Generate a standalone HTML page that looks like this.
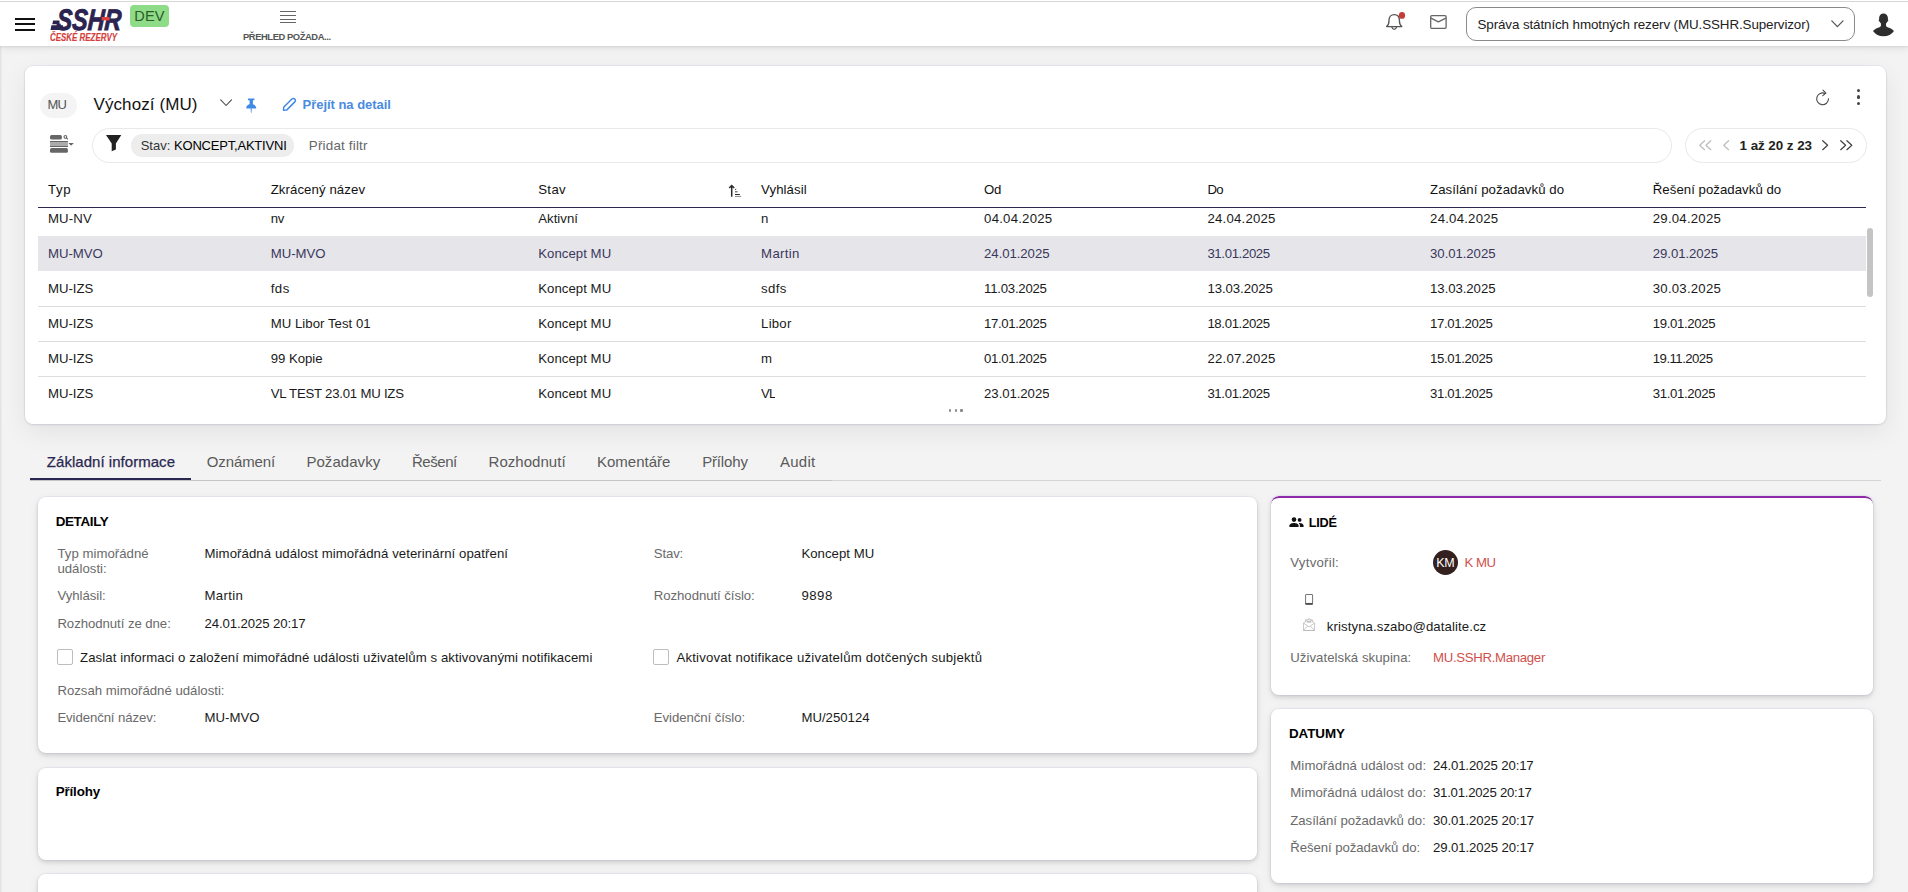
<!DOCTYPE html>
<html lang="cs">
<head>
<meta charset="utf-8">
<title>Přehled požadavků – SSHR</title>
<style>
*{box-sizing:border-box;margin:0;padding:0}
html,body{width:1908px;height:892px;overflow:hidden;background:#f3f3f3;font-family:"Liberation Sans",sans-serif;font-size:13.4px;color:#1a1a1a}
.abs{position:absolute}
.t{position:absolute;white-space:pre;line-height:16px}
svg{position:absolute;overflow:visible}
#topbar{position:absolute;left:0;top:0;width:1908px;height:46px;background:#fff;box-shadow:0 1px 2px rgba(0,0,0,.07),0 2px 8px rgba(0,0,0,.09)}
#topline{position:absolute;left:0;top:1px;width:1908px;height:1px;background:#d6d6d6}
.card{position:absolute;background:#fff;border-radius:8px;box-shadow:0 2px 4px rgba(0,0,0,.13),0 3px 12px rgba(0,0,0,.06),0 0 0 1px rgba(214,224,240,.40)}
.hl{position:absolute;height:1px;background:#dedede}
.cb{position:absolute;width:16px;height:16px;border:1px solid #bdbdbd;border-radius:2px;background:#fff}
</style>
</head>
<body>
<div class="abs" style="left:0;top:46px;width:2px;height:846px;background:linear-gradient(90deg,#e2e2e2,#ececec)"></div>
<div id="topbar"></div><div id="topline"></div>
<div class="abs" style="left:15px;top:17.5px;width:20px;height:2px;background:#111"></div><div class="abs" style="left:15px;top:23px;width:20px;height:2px;background:#111"></div><div class="abs" style="left:15px;top:28.5px;width:20px;height:2px;background:#111"></div>
<svg style="left:0;top:0" width="180" height="46" viewBox="0 0 180 46"><g transform="translate(56.3,29.7) scale(1,1.16) skewX(-4)"><text x="0" y="0" font-family="Liberation Sans, sans-serif" font-size="25.6" font-weight="700" font-style="italic" fill="#2b2350" stroke="#2b2350" stroke-width="0.75" textLength="64.5" lengthAdjust="spacingAndGlyphs">SSHR</text></g><path d="M51.4 25.3 H63 V29.95 H50.5 Z M53.1 20.5 H59.5 V24.3 H52.3 Z" fill="#2b2350"/><rect x="101.6" y="17" width="8" height="3.4" fill="#e0413a"/><g transform="translate(50,40.7) scale(1,1.14)"><text x="0" y="0" font-family="Liberation Sans, sans-serif" font-size="9.3" font-weight="700" font-style="italic" fill="#d5403c" stroke="#d5403c" stroke-width="0.15" textLength="67" lengthAdjust="spacingAndGlyphs">ČESKÉ REZERVY</text></g></svg>
<div class="abs" style="left:130px;top:5px;width:39px;height:22px;border-radius:4px;background:#8edc87"></div>
<div class="t" style="left:134.3px;top:8px;font-size:14.6px;color:#2c5a28;letter-spacing:0.092px;">DEV</div>
<div class="abs" style="left:280px;top:11.2px;width:16px;height:1.1px;background:#666"></div>
<div class="abs" style="left:280px;top:14.9px;width:16px;height:1.1px;background:#666"></div>
<div class="abs" style="left:280px;top:18.5px;width:16px;height:1.1px;background:#666"></div>
<div class="abs" style="left:280px;top:22.1px;width:16px;height:1.1px;background:#666"></div>
<div class="t" style="left:243.0px;top:29px;font-size:9.4px;font-weight:700;color:#555;letter-spacing:-0.426px;">PŘEHLED POŽADA...</div>
<svg style="left:1384px;top:12px" width="22" height="22" viewBox="0 0 22 22" fill="none" stroke="#555" stroke-width="1.3" stroke-linecap="round" stroke-linejoin="round"><path d="M2.6 14.6 C4.6 13 5 11.6 5 8.4 C5 5 7 2.6 10.2 2.6 C13.4 2.6 15.4 5 15.4 8.4 C15.4 11.6 15.8 13 17.8 14.6 Z"/><path d="M7.9 15.2 C8.3 16.8 9.1 17.4 10.2 17.4 C11.3 17.4 12.1 16.8 12.5 15.2"/><ellipse cx="18" cy="3.4" rx="3.1" ry="3.4" fill="#c43c37" stroke="none"/></svg>
<svg style="left:1430px;top:15px" width="17" height="14" viewBox="0 0 17 14" fill="none" stroke="#666" stroke-width="1.3" stroke-linejoin="round"><rect x="0.7" y="0.7" width="15.4" height="12.6" rx="1"/><path d="M0.9 3.1 L8.4 6.9 L15.9 3.1"/></svg>
<div class="abs" style="left:1466px;top:7px;width:389px;height:34px;border:1px solid #8a8a8a;border-radius:10px;background:#fff"></div>
<div class="t" style="left:1477.5px;top:17px;font-size:13.4px;color:#222;letter-spacing:-0.105px;">Správa státních hmotných rezerv (MU.SSHR.Supervizor)</div>
<svg style="left:1831px;top:19.5px" width="13" height="8" viewBox="0 0 13 8" fill="none" stroke="#555" stroke-width="1.3" stroke-linecap="round" stroke-linejoin="round"><path d="M0.8 0.9 L6.4 6.6 L12 0.9"/></svg>
<svg style="left:1873px;top:12.5px" width="21" height="24" viewBox="0 0 21 24"><g fill="#2e2e2e"><rect x="6.1" y="0.4" width="8.8" height="10.8" rx="4.4" ry="4.8"/><ellipse cx="10.5" cy="7.6" rx="4.9" ry="1.3"/><path d="M7.6 9 C8.2 11.6 8.3 13.2 7 13.9 C4.4 14.7 1.6 15.9 0 17.9 C2.4 21.1 6 23.3 10.5 23.3 C15 23.3 18.6 21.1 21 17.9 C19.4 15.9 16.6 14.7 14 13.9 C12.7 13.2 12.8 11.6 13.4 9 Z"/></g></svg>
<div class="card" style="left:25px;top:66px;width:1861px;height:358px;box-shadow:0 1px 3px rgba(0,0,0,.08),0 8px 26px rgba(0,0,0,.07),0 0 0 1px rgba(205,216,234,.35)"></div>
<div class="abs" style="left:39.5px;top:92.5px;width:37px;height:25px;border-radius:12.5px;background:#f4f4f4"></div>
<div class="t" style="left:47.5px;top:97px;font-size:13px;color:#555;letter-spacing:-0.719px;">MU</div>
<div class="t" style="left:93.5px;top:97px;font-size:17px;color:#111;letter-spacing:0.094px;">Výchozí (MU)</div>
<svg style="left:219.8px;top:98.5px" width="13" height="8" viewBox="0 0 13 8" fill="none" stroke="#444" stroke-width="1.05" stroke-linecap="round" stroke-linejoin="round"><path d="M0.7 0.8 L6.1 6.5 L11.5 0.8"/></svg>
<svg style="left:245px;top:97.5px" width="13" height="16" viewBox="0 0 13 16"><g fill="#408ae6"><rect x="2.9" y="0.5" width="6.6" height="1.7" rx="0.5"/><rect x="4.6" y="1.8" width="3.3" height="5"/><path d="M1.2 10.6 C1 8 3 6.1 6.2 6.1 C9.4 6.1 11.4 8 11.2 10.6 Z"/><path d="M5.6 10.4 H6.8 L6.4 15 H6 Z"/></g></svg>
<svg style="left:282px;top:97px" width="15" height="15" viewBox="0 0 15 15" fill="none" stroke="#408ae6" stroke-width="1.5" stroke-linejoin="round"><path d="M1.7 10.2 L9.9 2 A2.05 2.05 0 0 1 12.8 4.9 L4.6 13.1 L1.5 13.3 Z"/></svg>
<div class="t" style="left:302.5px;top:97px;font-size:13px;font-weight:700;color:#4a8be0;letter-spacing:-0.025px;">Přejít na detail</div>
<svg style="left:1815px;top:88.5px" width="16" height="17" viewBox="0 0 16 17" fill="none" stroke="#484848" stroke-width="1.1" stroke-linecap="round" stroke-linejoin="round"><path d="M13.5 9.8 A5.9 5.9 0 1 1 10 4.4"/><path d="M8 1.1 L10.9 4.1 L7.8 6.6"/></svg>
<div class="abs" style="left:1856.6px;top:88.89999999999999px;width:3.4px;height:3.4px;border-radius:50%;background:#444"></div>
<div class="abs" style="left:1856.6px;top:95.2px;width:3.4px;height:3.4px;border-radius:50%;background:#444"></div>
<div class="abs" style="left:1856.6px;top:101.5px;width:3.4px;height:3.4px;border-radius:50%;background:#444"></div>
<svg style="left:50px;top:135px" width="24" height="18" viewBox="0 0 24 18"><rect x="0" y="0" width="11.9" height="4.4" rx="1.5" fill="#666"/><rect x="0" y="6" width="17.9" height="6" fill="#ababab"/><rect x="0" y="6" width="17.9" height="1" fill="#666"/><rect x="0" y="11" width="17.9" height="1" fill="#666"/><rect x="0" y="13.1" width="17.9" height="4.7" rx="1.5" fill="#666"/><path d="M18.4 7.9 H23.8 L21.1 10.8 Z" fill="#666"/><circle cx="15.4" cy="1.9" r="1.35" fill="none" stroke="#666" stroke-width="1.1"/><path d="M16.4 2.9 L17.8 4.3" stroke="#666" stroke-width="1.1"/></svg>
<div class="abs" style="left:92px;top:128px;width:1580px;height:35px;border:1px solid #e9e9e9;border-radius:17.5px;background:#fff"></div>
<svg style="left:105.8px;top:134.9px" width="16" height="17" viewBox="0 0 16 17"><path fill="#222" d="M0 0 H15.3 L9.9 8.6 V14.6 L5.7 16.2 V8.6 Z"/></svg>
<div class="abs" style="left:131px;top:134px;width:163px;height:22.5px;border-radius:11.25px;background:#ededed"></div>
<div class="t" style="left:140.7px;top:138px;font-size:13px;color:#333;">Stav: </div>
<div class="t" style="left:174.0px;top:138px;font-size:13px;color:#000;letter-spacing:-0.198px;">KONCEPT,AKTIVNI</div>
<div class="t" style="left:308.8px;top:138px;font-size:13.4px;color:#666;letter-spacing:0.194px;">Přidat filtr</div>
<div class="abs" style="left:1685px;top:128px;width:182px;height:35px;border:1px solid #e9e9e9;border-radius:17.5px;background:#fff"></div>
<svg style="left:1699.2px;top:140.4px" width="14" height="11" viewBox="0 0 14 11" fill="none" stroke="#bdbdbd" stroke-width="1.25" stroke-linecap="round" stroke-linejoin="round"><path d="M5.6 0.7 L0.7 5.2 L5.6 9.7"/><path d="M5.6 0.7 L0.7 5.2 L5.6 9.7" transform="translate(6.2,0)"/></svg>
<svg style="left:1723px;top:140.4px" width="14" height="11" viewBox="0 0 14 11" fill="none" stroke="#bdbdbd" stroke-width="1.25" stroke-linecap="round" stroke-linejoin="round"><path d="M5.6 0.7 L0.7 5.2 L5.6 9.7"/></svg>
<div class="t" style="left:1739.6px;top:138px;font-size:13.4px;font-weight:700;color:#222;letter-spacing:-0.052px;">1 až 20 z 23</div>
<svg style="left:1822.2px;top:140.4px" width="14" height="11" viewBox="0 0 14 11" fill="none" stroke="#444" stroke-width="1.25" stroke-linecap="round" stroke-linejoin="round"><path d="M0.7 0.7 L5.6 5.2 L0.7 9.7"/></svg>
<svg style="left:1839.9px;top:140.4px" width="14" height="11" viewBox="0 0 14 11" fill="none" stroke="#444" stroke-width="1.25" stroke-linecap="round" stroke-linejoin="round"><path d="M0.7 0.7 L5.6 5.2 L0.7 9.7"/><path d="M0.7 0.7 L5.6 5.2 L0.7 9.7" transform="translate(6.2,0)"/></svg>
<div class="t" style="left:48.0px;top:182px;font-size:13.2px;color:#111;letter-spacing:0.617px;">Typ</div>
<div class="t" style="left:270.7px;top:182px;font-size:13.2px;color:#111;letter-spacing:0.093px;">Zkrácený název</div>
<div class="t" style="left:538.2px;top:182px;font-size:13.2px;color:#111;letter-spacing:0.370px;">Stav</div>
<div class="t" style="left:761.1px;top:182px;font-size:13.2px;color:#111;letter-spacing:0.078px;">Vyhlásil</div>
<div class="t" style="left:984.1px;top:182px;font-size:13.2px;color:#111;letter-spacing:-0.294px;">Od</div>
<div class="t" style="left:1207.4px;top:182px;font-size:13.2px;color:#111;letter-spacing:-0.659px;">Do</div>
<div class="t" style="left:1430.1px;top:182px;font-size:13.2px;color:#111;letter-spacing:0.060px;">Zasílání požadavků do</div>
<div class="t" style="left:1652.8px;top:182px;font-size:13.2px;color:#111;letter-spacing:0.046px;">Řešení požadavků do</div>
<svg style="left:728px;top:184px" width="14" height="14" viewBox="0 0 14 14" fill="none" stroke="#2a2a2a"><path d="M3.7 12.8 V2 M1.2 4 L3.7 1.5 L6.2 4" stroke-width="1.5"/><path d="M7 5.4 H8.2" stroke-width="0.9"/><path d="M7 7.8 H9.6" stroke-width="0.9"/><path d="M7 10.5 H11.8" stroke-width="1"/><path d="M7 12.4 H13.1" stroke-width="0.8" stroke="#666"/></svg>
<div class="abs" style="left:38px;top:207px;width:1828px;height:1.4px;background:#2a2750"></div>
<div class="abs" style="left:38px;top:208.4px;width:1836px;height:191px;overflow:hidden">
<div class="abs" style="left:0;top:27.6px;width:1828px;height:35.4px;background:#e6e6ea"></div>
<div class="hl" style="left:0;top:97.6px;width:1828px"></div>
<div class="hl" style="left:0;top:132.6px;width:1828px"></div>
<div class="hl" style="left:0;top:167.6px;width:1828px"></div>
</div>
<div class="t" style="left:48.0px;top:211px;font-size:13.2px;letter-spacing:0.116px;">MU-NV</div>
<div class="t" style="left:270.7px;top:211px;font-size:13.2px;letter-spacing:-0.338px;">nv</div>
<div class="t" style="left:538.2px;top:211px;font-size:13.2px;letter-spacing:0.037px;">Aktivní</div>
<div class="t" style="left:761.1px;top:211px;font-size:13.2px;letter-spacing:-0.344px;">n</div>
<div class="t" style="left:984.1px;top:211px;font-size:13.2px;letter-spacing:0.220px;">04.04.2025</div>
<div class="t" style="left:1207.4px;top:211px;font-size:13.2px;letter-spacing:0.220px;">24.04.2025</div>
<div class="t" style="left:1430.1px;top:211px;font-size:13.2px;letter-spacing:0.220px;">24.04.2025</div>
<div class="t" style="left:1652.8px;top:211px;font-size:13.2px;letter-spacing:0.220px;">29.04.2025</div>
<div class="t" style="left:48.0px;top:246px;font-size:13.2px;color:#3a375c;letter-spacing:-0.031px;">MU-MVO</div>
<div class="t" style="left:270.7px;top:246px;font-size:13.2px;color:#3a375c;letter-spacing:-0.031px;">MU-MVO</div>
<div class="t" style="left:538.2px;top:246px;font-size:13.2px;color:#3a375c;letter-spacing:0.047px;">Koncept MU</div>
<div class="t" style="left:761.1px;top:246px;font-size:13.2px;color:#3a375c;letter-spacing:0.332px;">Martin</div>
<div class="t" style="left:984.1px;top:246px;font-size:13.2px;color:#3a375c;letter-spacing:-0.068px;">24.01.2025</div>
<div class="t" style="left:1207.4px;top:246px;font-size:13.2px;color:#3a375c;letter-spacing:-0.357px;">31.01.2025</div>
<div class="t" style="left:1430.1px;top:246px;font-size:13.2px;color:#3a375c;letter-spacing:-0.068px;">30.01.2025</div>
<div class="t" style="left:1652.8px;top:246px;font-size:13.2px;color:#3a375c;letter-spacing:-0.068px;">29.01.2025</div>
<div class="t" style="left:48.0px;top:281px;font-size:13.2px;letter-spacing:-0.024px;">MU-IZS</div>
<div class="t" style="left:270.7px;top:281px;font-size:13.2px;letter-spacing:0.503px;">fds</div>
<div class="t" style="left:538.2px;top:281px;font-size:13.2px;letter-spacing:0.047px;">Koncept MU</div>
<div class="t" style="left:761.1px;top:281px;font-size:13.2px;letter-spacing:0.337px;">sdfs</div>
<div class="t" style="left:984.1px;top:281px;font-size:13.2px;letter-spacing:-0.248px;">11.03.2025</div>
<div class="t" style="left:1207.4px;top:281px;font-size:13.2px;letter-spacing:-0.068px;">13.03.2025</div>
<div class="t" style="left:1430.1px;top:281px;font-size:13.2px;letter-spacing:-0.068px;">13.03.2025</div>
<div class="t" style="left:1652.8px;top:281px;font-size:13.2px;letter-spacing:0.220px;">30.03.2025</div>
<div class="t" style="left:48.0px;top:316px;font-size:13.2px;letter-spacing:-0.024px;">MU-IZS</div>
<div class="t" style="left:270.7px;top:316px;font-size:13.2px;letter-spacing:0.036px;">MU Libor Test 01</div>
<div class="t" style="left:538.2px;top:316px;font-size:13.2px;letter-spacing:0.047px;">Koncept MU</div>
<div class="t" style="left:761.1px;top:316px;font-size:13.2px;letter-spacing:0.218px;">Libor</div>
<div class="t" style="left:984.1px;top:316px;font-size:13.2px;letter-spacing:-0.357px;">17.01.2025</div>
<div class="t" style="left:1207.4px;top:316px;font-size:13.2px;letter-spacing:-0.357px;">18.01.2025</div>
<div class="t" style="left:1430.1px;top:316px;font-size:13.2px;letter-spacing:-0.357px;">17.01.2025</div>
<div class="t" style="left:1652.8px;top:316px;font-size:13.2px;letter-spacing:-0.357px;">19.01.2025</div>
<div class="t" style="left:48.0px;top:351px;font-size:13.2px;letter-spacing:-0.024px;">MU-IZS</div>
<div class="t" style="left:270.7px;top:351px;font-size:13.2px;letter-spacing:-0.038px;">99 Kopie</div>
<div class="t" style="left:538.2px;top:351px;font-size:13.2px;letter-spacing:0.047px;">Koncept MU</div>
<div class="t" style="left:761.1px;top:351px;font-size:13.2px;">m</div>
<div class="t" style="left:984.1px;top:351px;font-size:13.2px;letter-spacing:-0.357px;">01.01.2025</div>
<div class="t" style="left:1207.4px;top:351px;font-size:13.2px;letter-spacing:0.220px;">22.07.2025</div>
<div class="t" style="left:1430.1px;top:351px;font-size:13.2px;letter-spacing:-0.357px;">15.01.2025</div>
<div class="t" style="left:1652.8px;top:351px;font-size:13.2px;letter-spacing:-0.537px;">19.11.2025</div>
<div class="t" style="left:48.0px;top:386px;font-size:13.2px;letter-spacing:-0.024px;height:11.5px;overflow:hidden;">MU-IZS</div>
<div class="t" style="left:270.7px;top:386px;font-size:13.2px;letter-spacing:-0.224px;height:11.5px;overflow:hidden;">VL TEST 23.01 MU IZS</div>
<div class="t" style="left:538.2px;top:386px;font-size:13.2px;letter-spacing:0.047px;height:11.5px;overflow:hidden;">Koncept MU</div>
<div class="t" style="left:761.1px;top:386px;font-size:13.2px;letter-spacing:-0.941px;height:11.5px;overflow:hidden;">VL</div>
<div class="t" style="left:984.1px;top:386px;font-size:13.2px;letter-spacing:-0.068px;height:11.5px;overflow:hidden;">23.01.2025</div>
<div class="t" style="left:1207.4px;top:386px;font-size:13.2px;letter-spacing:-0.357px;height:11.5px;overflow:hidden;">31.01.2025</div>
<div class="t" style="left:1430.1px;top:386px;font-size:13.2px;letter-spacing:-0.357px;height:11.5px;overflow:hidden;">31.01.2025</div>
<div class="t" style="left:1652.8px;top:386px;font-size:13.2px;letter-spacing:-0.357px;height:11.5px;overflow:hidden;">31.01.2025</div>
<div class="abs" style="left:1867px;top:228px;width:6px;height:69px;border-radius:3px;background:#c4c4c4"></div>
<div class="abs" style="left:948.6px;top:409.3px;width:2.8px;height:2.8px;border-radius:1px;background:#8a8a8a"></div>
<div class="abs" style="left:954.5px;top:409.3px;width:2.8px;height:2.8px;border-radius:1px;background:#8a8a8a"></div>
<div class="abs" style="left:960.4px;top:409.3px;width:2.8px;height:2.8px;border-radius:1px;background:#8a8a8a"></div>
<div class="t" style="left:46.8px;top:454px;font-size:15px;color:#2a2750;letter-spacing:0.037px;-webkit-text-stroke:.25px #2a2750;">Základní informace</div>
<div class="t" style="left:206.8px;top:454px;font-size:15px;color:#5a5a5a;letter-spacing:-0.129px;">Oznámení</div>
<div class="t" style="left:306.4px;top:454px;font-size:15px;color:#5a5a5a;letter-spacing:0.053px;">Požadavky</div>
<div class="t" style="left:412.0px;top:454px;font-size:15px;color:#5a5a5a;letter-spacing:-0.466px;">Řešení</div>
<div class="t" style="left:488.6px;top:454px;font-size:15px;color:#5a5a5a;letter-spacing:0.030px;">Rozhodnutí</div>
<div class="t" style="left:597.0px;top:454px;font-size:15px;color:#5a5a5a;letter-spacing:-0.009px;">Komentáře</div>
<div class="t" style="left:702.2px;top:454px;font-size:15px;color:#5a5a5a;letter-spacing:-0.165px;">Přílohy</div>
<div class="t" style="left:780.1px;top:454px;font-size:15px;color:#5a5a5a;letter-spacing:0.199px;">Audit</div>
<div class="abs" style="left:30px;top:480px;width:802px;height:1px;background:#c6c6c6"></div>
<div class="abs" style="left:832px;top:480px;width:1049px;height:1px;background:#d4d4d4"></div>
<div class="abs" style="left:30px;top:478px;width:161px;height:2px;background:#2a2750"></div>
<div class="card" style="left:38px;top:497px;width:1219px;height:256px"></div>
<div class="t" style="left:55.7px;top:514px;font-size:13.4px;font-weight:700;color:#000;letter-spacing:-0.344px;">DETAILY</div>
<div class="t" style="left:57.4px;top:546px;font-size:13.2px;color:#6a6a6a;letter-spacing:0.034px;">Typ mimořádné</div>
<div class="t" style="left:57.4px;top:561px;font-size:13.2px;color:#6a6a6a;letter-spacing:0.022px;">události:</div>
<div class="t" style="left:204.5px;top:546px;font-size:13.2px;letter-spacing:0.078px;">Mimořádná událost mimořádná veterinární opatření</div>
<div class="t" style="left:653.8px;top:546px;font-size:13.2px;color:#6a6a6a;letter-spacing:-0.141px;">Stav:</div>
<div class="t" style="left:801.4px;top:546px;font-size:13.2px;letter-spacing:0.025px;">Koncept MU</div>
<div class="t" style="left:57.4px;top:588px;font-size:13.2px;color:#6a6a6a;letter-spacing:-0.028px;">Vyhlásil:</div>
<div class="t" style="left:204.5px;top:588px;font-size:13.2px;letter-spacing:0.332px;">Martin</div>
<div class="t" style="left:653.8px;top:588px;font-size:13.2px;color:#6a6a6a;letter-spacing:-0.057px;">Rozhodnutí číslo:</div>
<div class="t" style="left:801.4px;top:588px;font-size:13.2px;letter-spacing:0.519px;">9898</div>
<div class="t" style="left:57.4px;top:616px;font-size:13.2px;color:#6a6a6a;letter-spacing:-0.057px;">Rozhodnutí ze dne:</div>
<div class="t" style="left:204.5px;top:616px;font-size:13.2px;letter-spacing:-0.111px;">24.01.2025 20:17</div>
<div class="cb" style="left:57px;top:649px"></div>
<div class="t" style="left:80.0px;top:650px;font-size:13.2px;letter-spacing:0.079px;">Zaslat informaci o založení mimořádné události uživatelům s aktivovanými notifikacemi</div>
<div class="cb" style="left:653px;top:649px"></div>
<div class="t" style="left:676.4px;top:650px;font-size:13.2px;letter-spacing:0.193px;">Aktivovat notifikace uživatelům dotčených subjektů</div>
<div class="t" style="left:57.4px;top:683px;font-size:13.2px;color:#6a6a6a;">Rozsah mimořádné události:</div>
<div class="t" style="left:57.4px;top:710px;font-size:13.2px;color:#6a6a6a;letter-spacing:-0.096px;">Evidenční název:</div>
<div class="t" style="left:204.5px;top:710px;font-size:13.2px;letter-spacing:0.009px;">MU-MVO</div>
<div class="t" style="left:653.8px;top:710px;font-size:13.2px;color:#6a6a6a;letter-spacing:-0.071px;">Evidenční číslo:</div>
<div class="t" style="left:801.4px;top:710px;font-size:13.2px;">MU/250124</div>
<div class="card" style="left:38px;top:768px;width:1219px;height:92px"></div>
<div class="t" style="left:55.7px;top:784px;font-size:13.4px;font-weight:700;color:#000;letter-spacing:-0.148px;">Přílohy</div>
<div class="card" style="left:38px;top:874px;width:1219px;height:60px"></div>
<div class="card" style="left:1271px;top:496px;width:602px;height:199px;overflow:hidden"><div class="abs" style="left:0;top:0;width:602px;height:30px;border-top:2.5px solid #8e2aa8;border-radius:8px 8px 0 0"></div></div>
<svg style="left:1289px;top:516.5px" width="15" height="11" viewBox="0 0 15 11"><g fill="#111"><circle cx="5" cy="2.6" r="2.3"/><path d="M0.4 10 V8.6 C0.4 6.8 3.4 6 5 6 C6.6 6 9.6 6.8 9.6 8.6 V10 Z"/><circle cx="10.6" cy="2.9" r="1.9"/><path d="M10.6 6.1 C10.3 6.1 10 6.1 9.7 6.2 C10.5 6.8 10.9 7.6 10.9 8.6 V10 H14.6 V8.6 C14.6 6.9 12 6.1 10.6 6.1 Z"/></g></svg>
<div class="t" style="left:1308.8px;top:515px;font-size:12.7px;font-weight:700;color:#000;letter-spacing:-0.235px;">LIDÉ</div>
<div class="t" style="left:1290.3px;top:555px;font-size:13.2px;color:#6a6a6a;letter-spacing:0.260px;">Vytvořil:</div>
<div class="abs" style="left:1433px;top:550.2px;width:25px;height:25px;border-radius:50%;background:#33201f"></div>
<div class="t" style="left:1436.3px;top:555px;font-size:12.5px;color:#fff;letter-spacing:-0.350px;">KM</div>
<div class="t" style="left:1464.5px;top:555px;font-size:13.2px;color:#d0504c;letter-spacing:-0.523px;">K MU</div>
<svg style="left:1305px;top:594px" width="8.2" height="11" viewBox="0 0 8.2 11" fill="none" stroke="#505050" stroke-width="0.8"><rect x="0.6" y="0.5" width="7" height="10" rx="0.5"/><path d="M0.6 9.7 H7.6" stroke-width="1.5"/></svg>
<svg style="left:1303px;top:618px" width="12" height="13" viewBox="0 0 12 13" fill="none" stroke="#bcbcc0" stroke-width="0.8" stroke-linejoin="round"><path d="M0.5 5 L6 0.6 L11.5 5 V12.5 H0.5 Z"/><path d="M2.6 4.2 V1.8 H9.4 V4.2"/><path d="M0.5 5 L6 9 L11.5 5"/><path d="M0.5 12.5 L4.6 8 M11.5 12.5 L7.4 8"/><path d="M3.8 3.9 H8.2" stroke="#999" stroke-width="1"/><path d="M0.5 12.5 H11.5" stroke="#bbb" stroke-width="1"/></svg>
<div class="t" style="left:1326.8px;top:619px;font-size:13.2px;letter-spacing:0.094px;">kristyna.szabo@datalite.cz</div>
<div class="t" style="left:1290.3px;top:650px;font-size:13.2px;color:#6a6a6a;letter-spacing:0.041px;">Uživatelská skupina:</div>
<div class="t" style="left:1433.0px;top:650px;font-size:13.2px;color:#d0504c;letter-spacing:-0.302px;">MU.SSHR.Manager</div>
<div class="card" style="left:1271px;top:709px;width:602px;height:174px"></div>
<div class="t" style="left:1289.0px;top:726px;font-size:13.4px;font-weight:700;color:#000;letter-spacing:-0.059px;">DATUMY</div>
<div class="t" style="left:1290.3px;top:758px;font-size:13.2px;color:#6a6a6a;letter-spacing:0.082px;">Mimořádná událost od:</div>
<div class="t" style="left:1433.0px;top:758px;font-size:13.2px;letter-spacing:-0.131px;">24.01.2025 20:17</div>
<div class="t" style="left:1290.3px;top:785px;font-size:13.2px;color:#6a6a6a;letter-spacing:0.082px;">Mimořádná událost do:</div>
<div class="t" style="left:1433.0px;top:785px;font-size:13.2px;letter-spacing:-0.251px;">31.01.2025 20:17</div>
<div class="t" style="left:1290.3px;top:813px;font-size:13.2px;color:#6a6a6a;letter-spacing:-0.046px;">Zasílání požadavků do:</div>
<div class="t" style="left:1433.0px;top:813px;font-size:13.2px;letter-spacing:-0.098px;">30.01.2025 20:17</div>
<div class="t" style="left:1290.3px;top:840px;font-size:13.2px;color:#6a6a6a;letter-spacing:-0.075px;">Řešení požadavků do:</div>
<div class="t" style="left:1433.0px;top:840px;font-size:13.2px;letter-spacing:-0.111px;">29.01.2025 20:17</div>
</body>
</html>
